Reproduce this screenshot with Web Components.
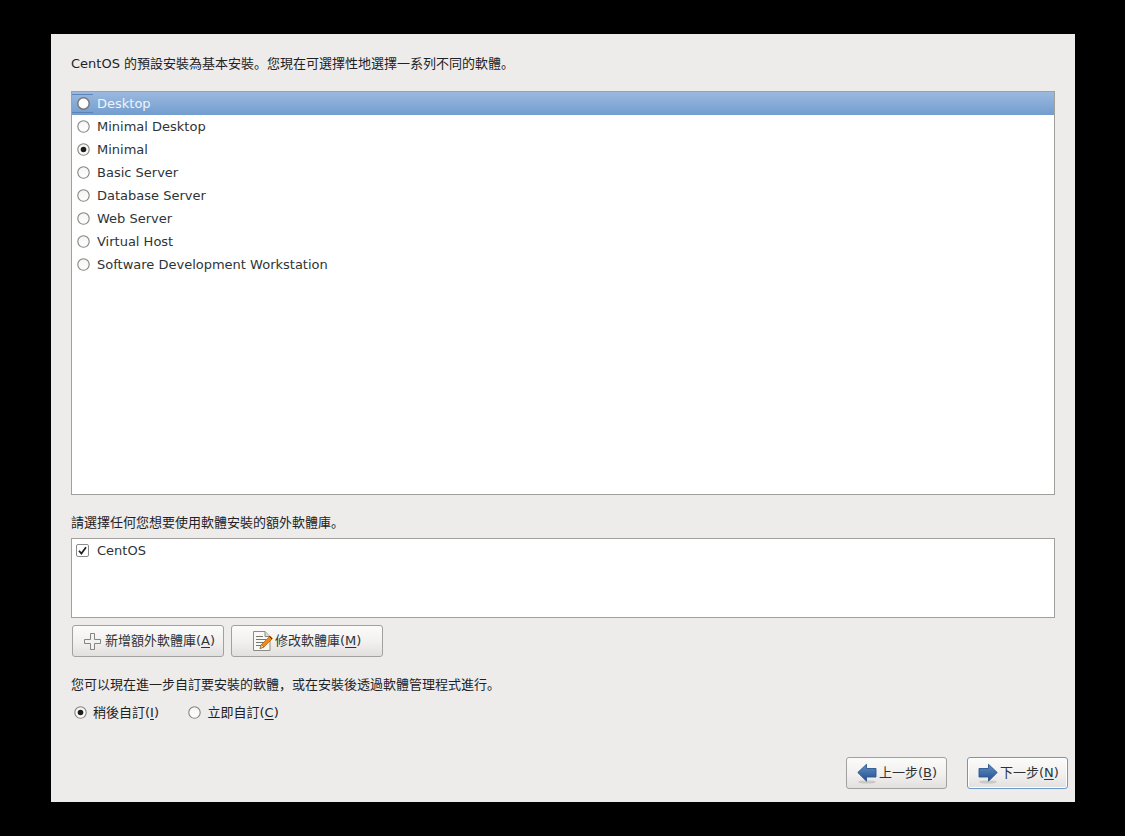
<!DOCTYPE html>
<html><head><meta charset="utf-8">
<style>
html,body{margin:0;padding:0;background:#000;height:836px;overflow:hidden}
body{font:13px/1 "DejaVu Sans","Noto Sans CJK SC",sans-serif;color:#2e3436}
</style></head><body>
<installer-page>
  <text-line style="--h:37px;--pt:1px">CentOS 的預設安裝為基本安裝。您現在可選擇性地選擇一系列不同的軟體。</text-line>
  <list-box style="--h:404px">
    <opt-row type="radio" selected>Desktop</opt-row>
    <opt-row type="radio">Minimal Desktop</opt-row>
    <opt-row type="radio" checked>Minimal</opt-row>
    <opt-row type="radio">Basic Server</opt-row>
    <opt-row type="radio">Database Server</opt-row>
    <opt-row type="radio">Web Server</opt-row>
    <opt-row type="radio">Virtual Host</opt-row>
    <opt-row type="radio">Software Development Workstation</opt-row>
  </list-box>
  <text-line style="--h:24px;--mt:19px">請選擇任何您想要使用軟體安裝的額外軟體庫。</text-line>
  <list-box style="--h:80px">
    <opt-row type="check" checked>CentOS</opt-row>
  </list-box>
  <button-row style="--gap:7px;--pl:1px;--mt:7px">
    <gtk-button icon="plus" w="152">新增額外軟體庫(<u>A</u>)</gtk-button>
    <gtk-button icon="edit" w="152">修改軟體庫(<u>M</u>)</gtk-button>
  </button-row>
  <text-line style="--h:20px;--mt:19px">您可以現在進一步自訂要安裝的軟體，或在安裝後透過軟體管理程式進行。</text-line>
  <choice-row>
    <gtk-choice checked>稍後自訂(<u>I</u>)</gtk-choice>
    <gtk-choice>立即自訂(<u>C</u>)</gtk-choice>
  </choice-row>
  <nav-row>
    <gtk-button icon="back" w="101">上一步(<u>B</u>)</gtk-button>
    <gtk-button icon="next" w="101" focused>下一步(<u>N</u>)</gtk-button>
  </nav-row>
</installer-page>
<script>
function def(name, css, html, extra){
  customElements.define(name, class extends HTMLElement{
    constructor(){super();this.attachShadow({mode:'open'}).innerHTML='<style>'+css+'</style>'+html;}
    connectedCallback(){ if(extra) extra(this); }
  });
}
def('installer-page',`:host{display:flex;flex-direction:column;box-sizing:border-box;width:1024px;height:768px;margin:34px 0 0 51px;padding:20px 20px 13px 20px;background:#edeceb}`,'<slot></slot>');
def('text-line',`:host{display:block;box-sizing:border-box;height:var(--h);margin-top:var(--mt,0);padding-top:var(--pt,0);line-height:18px;white-space:nowrap;color:#1f2224;flex:none}`,'<slot></slot>');
def('list-box',`:host{display:block;box-sizing:border-box;height:var(--h);border:1px solid #a2a09d;background:#fff;flex:none}`,'<slot></slot>');
def('button-row',`:host{display:flex;gap:var(--gap);padding-left:var(--pl);margin-top:var(--mt);flex:none}`,'<slot></slot>');
def('choice-row',`:host{display:flex;gap:29px;padding-left:2.5px;margin-top:6px;height:20px;align-items:center;flex:none}`,'<slot></slot>');
def('nav-row',`:host{display:flex;justify-content:flex-end;gap:20px;margin-top:auto;margin-right:-13px;flex:none}`,'<slot></slot>');

const radio=(checked,sel)=>`<svg width="13" height="13" viewBox="0 0 13 13"><defs><linearGradient id="r" x1="0" y1="0" x2="0" y2="1"><stop offset="0" stop-color="#f4f4f3"/><stop offset="1" stop-color="#fff"/></linearGradient></defs><circle cx="6.5" cy="6.5" r="5.7" fill="${sel?'#fff':'url(#r)'}" stroke="${sel?'#77787a':'#85857f'}" stroke-width="${sel?1.5:1.1}"/>${checked?'<circle cx="6.5" cy="6.5" r="2.8" fill="#1e1e1e"/>':''}</svg>`;
const check=`<svg width="13" height="13" viewBox="0 0 13 13"><rect x=".5" y=".5" width="12" height="12" rx="1.5" fill="#fff" stroke="#8a8a88"/><path d="M3 6.7 5.4 9.6 10 3.2" fill="none" stroke="#1e1e1e" stroke-width="1.7"/></svg>`;

def('opt-row',`:host{display:flex;align-items:center;height:23px;padding-left:4.5px;gap:7.5px;white-space:nowrap;box-sizing:border-box;color:#2e3436;position:relative}
:host([selected]){background:linear-gradient(#9bb9df,#729dcf);color:#eef4fb}
:host([type=check]){padding-left:4px;gap:8px}
.i{display:flex;width:13px;height:13px;position:relative}
:host([type=check]) .i{top:-.5px}
.t{padding-bottom:1px}
.f{display:none;position:absolute;left:0;top:2px;width:21px;height:19px;border-top:1px solid #5c84b8;border-bottom:1px solid #5c84b8;box-sizing:border-box}
:host([selected]) .f{display:block}`,
`<span class="f"></span><span class="i"></span><span class="t"><slot></slot></span>`,
el=>{const i=el.shadowRoot.querySelector('.i');
 i.innerHTML= el.getAttribute('type')==='check'?check:radio(el.hasAttribute('checked'),el.hasAttribute('selected'));});

def('gtk-choice',`:host{display:flex;align-items:center;gap:6.5px;white-space:nowrap;color:#1f2224;line-height:18px}.i{display:flex}.t{padding-top:2px}::slotted(u){text-underline-offset:2px}`,
`<span class="i"></span><span class="t"><slot></slot></span>`,
el=>{el.shadowRoot.querySelector('.i').innerHTML=radio(el.hasAttribute('checked'),false);});

const icons={
plus:`<svg width="17" height="17" viewBox="0 0 17 17"><path d="M6.5 .5h4v6h6v4h-6v6h-4v-6h-6v-4h6z" fill="#f2f2f0" stroke="#85857f"/></svg>`,
edit:`<svg width="22" height="22" viewBox="0 0 22 22"><path d="M1.5 1.5H13L18 6.5V20.5H1.5z" fill="#f8f8f6" stroke="#8b8b86"/><path d="M13 1.5V6.5H18" fill="#d8d8d4" stroke="#8b8b86"/><path d="M4 6.5h7M4 9.5h10M4 12.5h9M4 15.5h6" stroke="#77776f" stroke-width="1.1"/><path d="M8 18.5 9.5 14.5 18 6 20.5 8.5 12 17z" fill="#f08a12" stroke="#b05a08" stroke-width=".7"/><path d="M8 18.5 9.5 14.5 12 17z" fill="#f4d9b0" stroke="#5a4a30" stroke-width=".5"/><path d="M17.5 6.5 20 9" stroke="#333" stroke-width="1"/></svg>`,
back:`<svg width="20" height="22" viewBox="0 0 20 22"><defs><linearGradient id="b" x1="0" y1="0" x2="0" y2="1"><stop offset="0" stop-color="#5f8fc7"/><stop offset="1" stop-color="#24508f"/></linearGradient></defs><ellipse cx="10" cy="20" rx="9" ry="1.6" fill="#000" opacity=".13"/><path d="M.8 10.5 9.5 2.3V6.5H19V15H9.5V19.2Z" fill="url(#b)" stroke="#2b5690" stroke-width=".9" stroke-linejoin="round"/></svg>`,
next:`<svg width="20" height="22" viewBox="0 0 20 22"><defs><linearGradient id="n" x1="0" y1="0" x2="0" y2="1"><stop offset="0" stop-color="#5f8fc7"/><stop offset="1" stop-color="#24508f"/></linearGradient></defs><ellipse cx="10" cy="20" rx="9" ry="1.6" fill="#000" opacity=".13"/><path d="M19.2 10.5 10.5 2.3V6.5H1V15H10.5V19.2Z" fill="url(#n)" stroke="#2b5690" stroke-width=".9" stroke-linejoin="round"/></svg>`};

const pad={plus:[11,4],edit:[20,1],back:[10,2],next:[10,2]};
def('gtk-button',`:host{display:flex;align-items:center;box-sizing:border-box;height:32px;border:1px solid #a3a19e;border-radius:3px;background:linear-gradient(#fbfbfa,#f1f0ef 55%,#e2e0de);white-space:nowrap;color:#2e3436;line-height:18px;flex:none}
:host([focused]){border-color:#6d97c9;box-shadow:inset 0 0 0 1px #fff}
.i{display:flex}::slotted(u){text-underline-offset:2px}`,
`<span class="i"></span><span><slot></slot></span>`,
el=>{el.style.width=el.getAttribute('w')+'px';
 const k=el.getAttribute('icon');const i=el.shadowRoot.querySelector('.i');i.innerHTML=icons[k];
 el.style.paddingLeft=pad[k][0]+'px';i.style.marginRight=pad[k][1]+'px';});
</script>
</body></html>
